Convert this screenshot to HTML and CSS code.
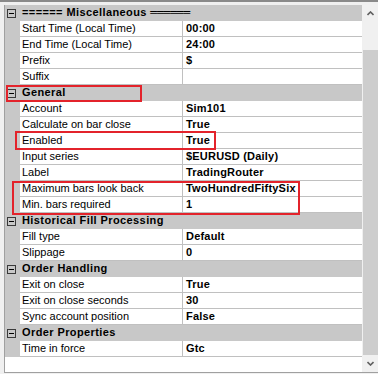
FILE: index.html
```html
<!DOCTYPE html>
<html>
<head>
<meta charset="utf-8">
<link rel="stylesheet" href="styles.css">
</head>
<body>
<div class="frame">
  <div class="pane">
    <div class="grid">
      <div class="hdr"><div class="gut"><span class="mbox"></span></div><div class="title">====== Miscellaneous <span class="dbl">══════</span></div></div>
      <div class="row"><div class="gut"></div><div class="name">Start Time (Local Time)</div><div class="val">00:00</div></div>
      <div class="row"><div class="gut"></div><div class="name">End Time (Local Time)</div><div class="val">24:00</div></div>
      <div class="row"><div class="gut"></div><div class="name">Prefix</div><div class="val">$</div></div>
      <div class="row"><div class="gut"></div><div class="name">Suffix</div><div class="val"></div></div>
      <div class="hdr"><div class="gut"><span class="mbox"></span></div><div class="title">General</div></div>
      <div class="row"><div class="gut"></div><div class="name">Account</div><div class="val">Sim101</div></div>
      <div class="row"><div class="gut"></div><div class="name">Calculate on bar close</div><div class="val">True</div></div>
      <div class="row"><div class="gut"></div><div class="name">Enabled</div><div class="val">True</div></div>
      <div class="row"><div class="gut"></div><div class="name">Input series</div><div class="val">$EURUSD (Daily)</div></div>
      <div class="row"><div class="gut"></div><div class="name">Label</div><div class="val">TradingRouter</div></div>
      <div class="row"><div class="gut"></div><div class="name">Maximum bars look back</div><div class="val">TwoHundredFiftySix</div></div>
      <div class="row"><div class="gut"></div><div class="name">Min. bars required</div><div class="val">1</div></div>
      <div class="hdr"><div class="gut"><span class="mbox"></span></div><div class="title">Historical Fill Processing</div></div>
      <div class="row"><div class="gut"></div><div class="name">Fill type</div><div class="val">Default</div></div>
      <div class="row"><div class="gut"></div><div class="name">Slippage</div><div class="val">0</div></div>
      <div class="hdr"><div class="gut"><span class="mbox"></span></div><div class="title">Order Handling</div></div>
      <div class="row"><div class="gut"></div><div class="name">Exit on close</div><div class="val">True</div></div>
      <div class="row"><div class="gut"></div><div class="name">Exit on close seconds</div><div class="val">30</div></div>
      <div class="row"><div class="gut"></div><div class="name">Sync account position</div><div class="val">False</div></div>
      <div class="hdr"><div class="gut"><span class="mbox"></span></div><div class="title">Order Properties</div></div>
      <div class="row"><div class="gut"></div><div class="name">Time in force</div><div class="val">Gtc</div></div>
    </div>
    <div class="scrollbar">
      <div class="sbtn"><svg width="7" height="5" viewBox="0 0 7 5"><polyline points="0.5,4 3.5,1 6.5,4" fill="none" stroke="#606060" stroke-width="1.6"/></svg></div>
      <div class="track"><div class="thumb"></div></div>
      <div class="sbtn"><svg width="7" height="5" viewBox="0 0 7 5"><polyline points="0.5,1 3.5,4 6.5,1" fill="none" stroke="#606060" stroke-width="1.6"/></svg></div>
    </div>
  </div>
  <div class="mark m1"></div>
  <div class="mark m2"></div>
  <div class="mark m3"></div>
</div>
</body>
</html>
```
FILE: styles.css
```css
html, body {
  margin: 0;
  padding: 0;
  background: #f0f0f0;
}
.frame {
  position: relative;
  width: 378px;
  height: 374px;
  box-sizing: border-box;
  border-top: 2px solid #8a8a8a;
  padding: 3px 0 1px 4px;
  font-family: "Liberation Sans", Arial, sans-serif;
  font-size: 11px;
  color: #000;
}
.pane {
  display: flex;
  height: 368px;
  box-sizing: border-box;
  border-left: 1px solid #a0a0a0;
  border-bottom: 1px solid #a0a0a0;
  background: #fff;
}
.grid {
  width: 357px;
  display: flex;
  flex-direction: column;
}
.row {
  display: grid;
  grid-template-columns: 15px 162px 180px;
  height: 16px;
}
.hdr {
  display: grid;
  grid-template-columns: 15px 342px;
  height: 16px;
  background: #c8c8c8;
}
.gut {
  background: #c8c8c8;
  position: relative;
}
.name, .val, .title {
  box-sizing: border-box;
  height: 16px;
  line-height: 15px;
  white-space: nowrap;
  overflow: hidden;
}
.name {
  padding-left: 2px;
  border-bottom: 1px solid #c0c0c0;
}
.val {
  padding-left: 3px;
  border-left: 1px solid #c0c0c0;
  border-bottom: 1px solid #c0c0c0;
  font-weight: bold;
  letter-spacing: 0.2px;
}
.title {
  padding-left: 2px;
  font-weight: bold;
  letter-spacing: 0.4px;
  overflow: visible;
}
.dbl {
  font-family: "DejaVu Sans", sans-serif;
  font-weight: normal;
  letter-spacing: 0;
}
.mbox {
  position: absolute;
  left: 2px;
  top: 4px;
  width: 9px;
  height: 9px;
  box-sizing: border-box;
  border: 1px solid #3a3a3a;
  background: #c8c8c8;
}
.mbox::after {
  content: "";
  position: absolute;
  left: 1px;
  top: 3px;
  width: 5px;
  height: 1px;
  background: #000;
}
.scrollbar {
  width: 16px;
  display: flex;
  flex-direction: column;
  background: #f0f0f0;
}
.sbtn {
  height: 17px;
  display: flex;
  align-items: center;
  justify-content: center;
}
.track {
  flex: 1;
  display: flex;
  flex-direction: column;
  padding-top: 28px;
}
.thumb {
  flex: 1;
  margin-left: 1px;
  background: #cdcdcd;
}
.mark {
  position: absolute;
  box-sizing: border-box;
  border: 2px solid #e3232b;
}
.m1 { left: 6px; top: 83px; width: 136px; height: 17px; }
.m2 { left: 15px; top: 129px; width: 201px; height: 19px; }
.m3 { left: 12px; top: 179px; width: 288px; height: 34px; }
```
